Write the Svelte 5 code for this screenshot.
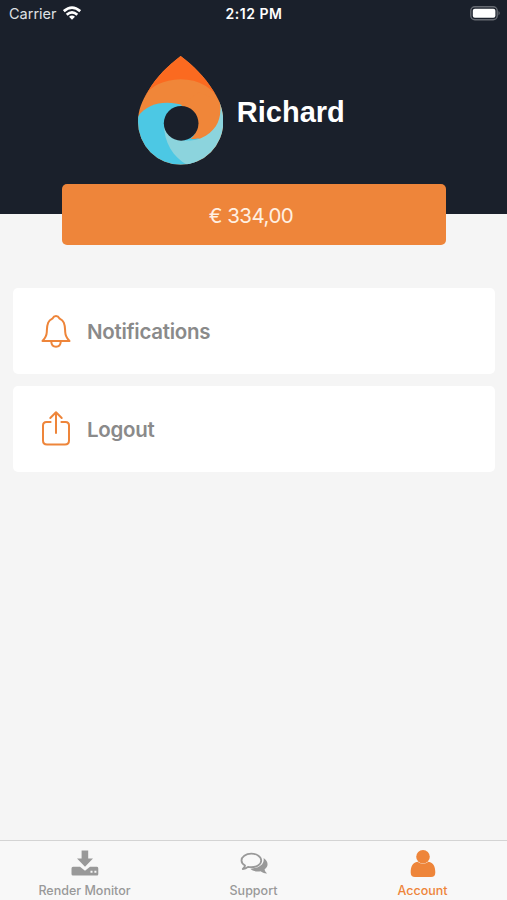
<script>
  const rows = [
    { label: 'Notifications', icon: 'bell' },
    { label: 'Logout', icon: 'share' }
  ];
  const tabs = [
    { label: 'Render Monitor', icon: 'download' },
    { label: 'Support', icon: 'chat' },
    { label: 'Account', icon: 'person', active: true }
  ];
</script>

<div class="screen">
  <header>
    <div class="status">
      <div class="carrier">
        <span>Carrier</span>
        <svg width="18" height="14" viewBox="0 0 18 14">
          <g fill="none" stroke="#fff" stroke-width="2.7">
            <path d="M.8 5.2Q9-1.8 17.200 5.2" />
            <path d="M3.700 8.700Q9 4.100 14.300 8.700" />
          </g>
          <path d="M6 10.800Q9 8.300 12 10.800L9 13.800Z" fill="#fff" />
        </svg>
      </div>
      <span class="time">2:12 PM</span>
      <svg class="battery" width="31" height="15" viewBox="0 0 31 15">
        <rect x=".8" y=".8" width="26.4" height="13" rx="4" fill="#1a202b" stroke="#666a72" stroke-width="1.4" />
        <rect x="2.8" y="2.8" width="22.6" height="9" rx="2" fill="#fff" />
        <path d="M28.5 5Q31 7.2 28.5 9.5Z" fill="#666a72" />
      </svg>
    </div>
    <div class="profile">
      <svg class="logo" width="85.3" height="108.7" viewBox="38 32 256 326">
        <defs>
          <clipPath id="drop">
            <path d="M166 32C205 62 237 93 264 136C284 167 294 194 294 230A128 128 0 0 1 38 230C38 194 50 167 69 136C95 93 128 61 166 32Z" />
          </clipPath>
        </defs>
        <g clip-path="url(#drop)">
          <path d="M30 25H300V365H30Z" fill="#f08639" />
          <path d="M30 20H300V190Q255 102 166 102Q86 106 60 151L30 190Z" fill="#fb6a20" />
          <path d="M30 226C58 174 118 162 176 181L220 280L210 365H30Z" fill="#4cc8e4" />
          <path d="M116 232C145 305 210 285 228 278C274 257 292 219 283 168L310 160V365H197C147 340 115 296 116 232Z" fill="#8cd4dd" />
          <path d="M166 183C218 181 238 242 196 281C246 284 295 231 283 168L220 140Z" fill="#f08639" />
        </g>
        <circle cx="167.500" cy="234" r="52" fill="#1a202b" />
      </svg>
      <h1>Richard</h1>
    </div>
  </header>

  <div class="balance"><span>€ 334,00</span></div>

  <main>
    {#each rows as row}
      <div class="row">
        {#if row.icon === 'bell'}
          <svg width="30" height="34" viewBox="0 0 30 34" fill="none" stroke="#ee853a" stroke-width="2" stroke-linejoin="round" stroke-linecap="round">
            <path d="M1.500 27C4 24.500 5.600 22 5.800 18C6 14 5.900 11.500 7.200 8.600C8.300 6.300 9.800 5.500 11.300 4.700C12.300 2.900 13.300 2 15 2S17.700 2.900 18.700 4.700C20.200 5.500 21.700 6.300 22.800 8.600C24.100 11.500 24 14 24.200 18C24.400 22 26 24.500 28.500 27Z" />
            <path d="M10.300 28C10.600 34.200 19.400 34.200 19.700 28" />
          </svg>
        {:else}
          <svg class="share" width="30" height="36" viewBox="0 0 30 36" fill="none" stroke="#ee853a" stroke-width="2" stroke-linecap="round" stroke-linejoin="round">
            <path d="M9.600 12H5.500Q2 12 2 15.500V30.500Q2 34.500 6 34.500H24Q28 34.500 28 30.500V15.500Q28 12 24.500 12H20.400" />
            <path d="M15 23V2.500M9.300 8L15 2.300L20.700 8" />
          </svg>
        {/if}
        <span>{row.label}</span>
      </div>
    {/each}
  </main>

  <nav>
    {#each tabs as tab}
      <div class="tab" class:active={tab.active}>
        {#if tab.icon === 'download'}
          <svg width="28" height="28" viewBox="0 0 28 28" fill="currentColor">
            <path d="M10.600 .5H17.200V8.500H22L14 16.800L6 8.500H10.600Z" />
            <path fill-rule="evenodd" d="M2 16.800H9L14 20.800L19 16.800H26Q27.300 16.800 27.300 18.500V24Q27.300 25.500 26 25.500H2Q.5 25.500 .5 24V18.500Q.5 16.800 2 16.800ZM19.500 20.800V22.800H21.500V20.800ZM23.400 20.800V22.800H25.400V20.800Z" />
          </svg>
        {:else if tab.icon === 'chat'}
          <svg width="28" height="28" viewBox="0 0 28 28">
            <path d="M23.600 8C28.800 11.600 28.600 16.500 24.600 19.300C24.700 21.300 26 22.500 27 23.400C24.300 23.500 22.200 22.600 20.500 21.300C16.300 22 12.600 20.900 10.300 18.700C18.300 18.400 24.700 15 23.600 8Z" fill="currentColor" />
            <path d="M11.300 3.700C17 3.700 21.200 6.700 21.200 10.500S17 17.200 11.300 17.200C10.100 17.200 9 17.100 8 16.900C6.500 18.200 4.700 18.900 2.800 19C4.200 17.800 4.900 16.800 5 15.600C2.900 14.300 1.500 12.500 1.500 10.500C1.500 6.700 5.700 3.700 11.300 3.700Z" fill="#f8f8f8" stroke="currentColor" stroke-width="1.800" stroke-linejoin="round" />
          </svg>
        {:else}
          <svg width="28" height="28" viewBox="0 0 28 28" fill="currentColor">
            <circle cx="14" cy="6.800" r="6.800" />
            <path d="M8.500 11.800Q14 15.500 19.500 11.800C24.500 12.500 26.300 17 26.300 22.500Q26.300 27 22 27H6Q1.700 27 1.700 22.500C1.700 17 3.500 12.500 8.500 11.800Z" />
          </svg>
        {/if}
        <span>{tab.label}</span>
      </div>
    {/each}
  </nav>
</div>

<style>
  .screen {
    width: 507px;
    height: 900px;
    display: flex;
    flex-direction: column;
    background: #f5f5f5;
    font-family: Inter, "Liberation Sans", sans-serif;
    overflow: hidden;
  }
  svg { display: block; flex: none; }
  header { height: 214px; flex: none; background: #1a202b; color: #fff; }
  .status {
    height: 28px;
    display: grid;
    grid-template-columns: 1fr auto 1fr;
    align-items: center;
    padding: 0 6px 0 9px;
    font-size: 14.5px;
    line-height: 28px;
  }
  .carrier { display: flex; align-items: center; gap: 6px; color: #dfe1e4; letter-spacing: 0; }
  .carrier svg { margin-top: -2px; }
  .time { font-weight: 600; font-size: 14px; letter-spacing: 0.5px; margin-right: 2px; }
  .battery { justify-self: end; margin-top: -1px; }
  .profile { display: flex; align-items: center; padding: 28px 0 0 137.500px; }
  h1 {
    margin: 3px 0 0 14px;
    font: bold 29px/34px "Liberation Sans", sans-serif;
  }
  .balance {
    position: relative;
    height: 61px;
    width: 384px;
    flex: none;
    margin: -30px 0 0 62px;
    border-radius: 5px;
    background: #ee853a;
    color: #fff0e2;
    display: flex;
    align-items: center;
    justify-content: center;
    font-size: 20.500px;
    letter-spacing: -0.5px;
  }
  .balance span { margin: 2px 6px 0 0; }
  main { padding: 43px 12px 0 13px; flex: 1; display: flex; flex-direction: column; gap: 12px; }
  .row {
    height: 86px;
    box-sizing: border-box;
    flex: none;
    background: #fff;
    border-radius: 5px;
    padding-left: 28px;
    display: flex;
    align-items: center;
    gap: 16px;
    color: #8a8a8a;
    font-size: 20.500px;
    font-weight: 600;
    letter-spacing: -0.28px;
  }
  .share { margin-top: -3px; }
  nav {
    height: 60px;
    box-sizing: border-box;
    flex: none;
    border-top: 1px solid #d4d4d4;
    background: #f8f8f8;
    display: grid;
    grid-template-columns: repeat(3, 1fr);
  }
  .tab {
    display: flex;
    flex-direction: column;
    align-items: center;
    padding-top: 9px;
    color: #999;
    font-size: 12.500px;
    line-height: 16px;
    font-weight: 500;
  }
  .tab span { margin-top: 5px; }
  .tab.active { color: #ee853a; }
</style>
